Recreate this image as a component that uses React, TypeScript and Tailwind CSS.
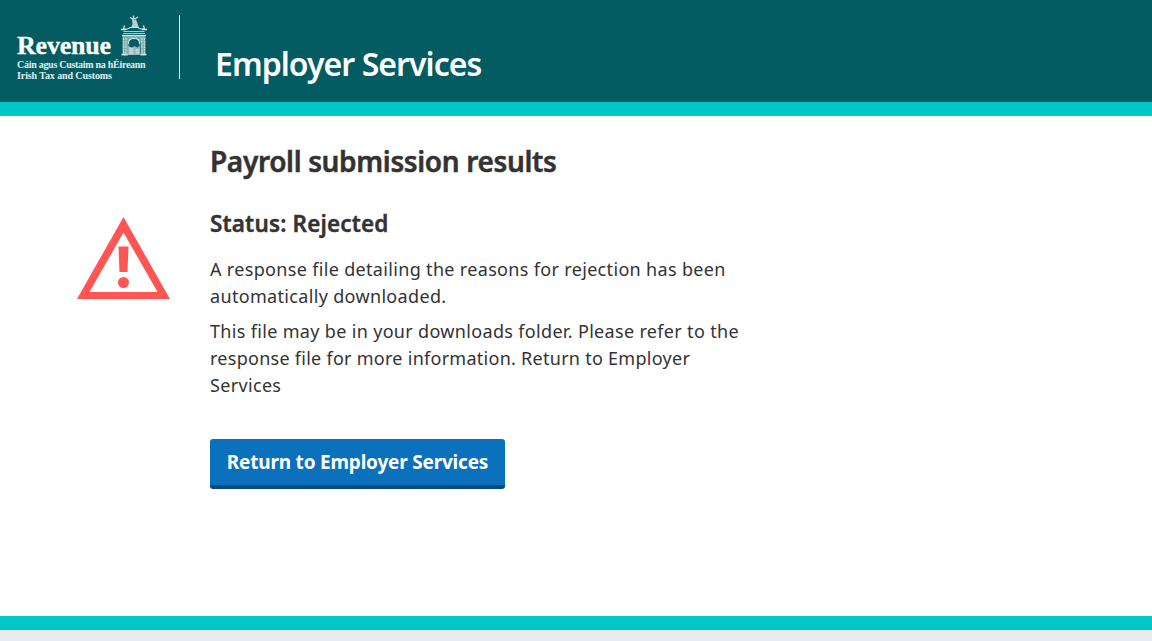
function ArchIcon() {
  return (
    <svg className="h-[42px] w-[28px]" viewBox="0 0 28 42" fill="none" stroke="#d5e5e5">
      <path d="M10 2.500l3 1.500 3.500-1 1.500-1M13.500 .5v4" strokeWidth="1.300" />
      <path d="M12 4.500h4l1.500 4 1.500 4.500h-8l1.500-4z" fill="#b5d0d1" stroke="none" />
      <path d="M3 13.500q5 1.500 7-1h8q2 2.500 7 1M4.500 10.500l-1 3.500M23.500 10.500l1 3.500" strokeWidth="1.200" />
      <path d="M1 14.500h5M22 14.500h5" strokeWidth="1.400" />
      <path d="M3.500 16.500h21M3 18.500h22" strokeWidth="1" opacity=".8" />
      <path d="M2.500 20.500h23v20h-5V29q0-6-6.500-6T8 29v11.500H2.500z" fill="#7fabad" stroke="none" />
      <path d="M2 20.500h24" strokeWidth="1.200" />
      <path d="M3.500 23v17M6 23v17M22 23v17M24.500 23v17" strokeWidth="1.200" strokeDasharray="2 .7" opacity=".8" />
      <path d="M8 40V28q0-5.500 6-5.500t6 5.500v12z" fill="#8fb5b7" stroke="none" />
      <path d="M8.500 31v-2.500q0-5 5.500-5t5.500 5V31l-2 1.500-3-1.500-3 2z" fill="#025c62" stroke="none" />
      <path d="M8.500 29v-1q0-4.500 5.500-4.500t5.500 4.500v1" strokeWidth="1.100" />
      <path d="M9 32l4.500 1v6.500H9zM15.500 34h3.500v5h-3.500z" fill="#b9d1d2" stroke="none" />
      <path d="M1.500 39.500h6M20.500 39.500h6" strokeWidth="1.300" />
    </svg>
  );
}

function RevenueLogo() {
  return (
    <div className="ml-[17px] h-[64px] w-[163px] border-r border-white font-['Liberation_Serif',serif] font-bold text-white">
      <div className="flex h-[42px] items-end">
        <span className="h-[23px] w-[103px] text-[26px] leading-[24px] tracking-[-0.200px] [-webkit-text-stroke:0.3px_white]">Revenue</span>
        <ArchIcon />
      </div>
      <div className="whitespace-nowrap text-[10px] leading-[10.500px] text-[#e3eeee]">
        <div className="pt-[3px] tracking-[-0.280px]">Cáin agus Custaim na hÉireann</div>
        <div className="tracking-[-0.100px]">Irish Tax and Customs</div>
      </div>
    </div>
  );
}

function WarningIcon() {
  return (
    <svg className="mt-[101px] ml-[77px] h-[82px] w-[93px] shrink-0" viewBox="0 0 93 82" fill="#ff5555">
      <path fillRule="evenodd" d="M46.500 0L93 82H0zM46.500 15.500L12.500 75h68z" />
      <path d="M41.500 29.500h10L50.500 55h-8z" />
      <circle cx="46.500" cy="65.500" r="5.500" />
    </svg>
  );
}

export default function App() {
  return (
    <div className="flex h-[641px] w-full flex-col overflow-hidden bg-white font-['Noto_Sans',sans-serif] text-[#333333]">
      <header className="flex h-[116px] shrink-0 items-start border-b-[14px] border-[#00c7c8] bg-[#025c62] pt-[15px]">
        <RevenueLogo />
        <h1 className="ml-[35px] mt-[25px] whitespace-nowrap text-[32px] leading-[48px] font-semibold tracking-[-0.950px] text-white">Employer Services</h1>
      </header>
      <main className="flex h-[500px] shrink-0 items-start">
        <WarningIcon />
        <div className="ml-[40px] whitespace-nowrap">
          <h2 className="mt-[25px] text-[28px] leading-[40px] font-semibold tracking-[-0.350px] [-webkit-text-stroke:0.5px_#333333]">Payroll submission results</h2>
          <h3 className="mt-[27px] text-[22.500px] leading-[32px] font-semibold tracking-[0.150px] [-webkit-text-stroke:0.4px_#333333]">Status: Rejected</h3>
          <p className="mt-[16px] text-[18px] leading-[27px] tracking-[0.330px]">
            A response file detailing the reasons for rejection has been
            <br />
            automatically downloaded.
          </p>
          <p className="mt-[8px] text-[18px] leading-[27px] tracking-[0.330px]">
            This file may be in your downloads folder. Please refer to the
            <br />
            <span className="tracking-[0.270px]">response file for more information. Return to Employer</span>
            <br />
            Services
          </p>
          <button className="mt-[40px] flex h-[50px] w-[295px] items-center justify-center rounded-[3px] border-b-4 border-[#064a80] bg-[#0b71bd] text-[19px] font-bold tracking-[-0.200px] text-white">
            Return to Employer Services
          </button>
        </div>
      </main>
      <footer className="h-[25px] shrink-0 border-t-[14px] border-[#00c7c8] bg-[#ebecee]" />
    </div>
  );
}
